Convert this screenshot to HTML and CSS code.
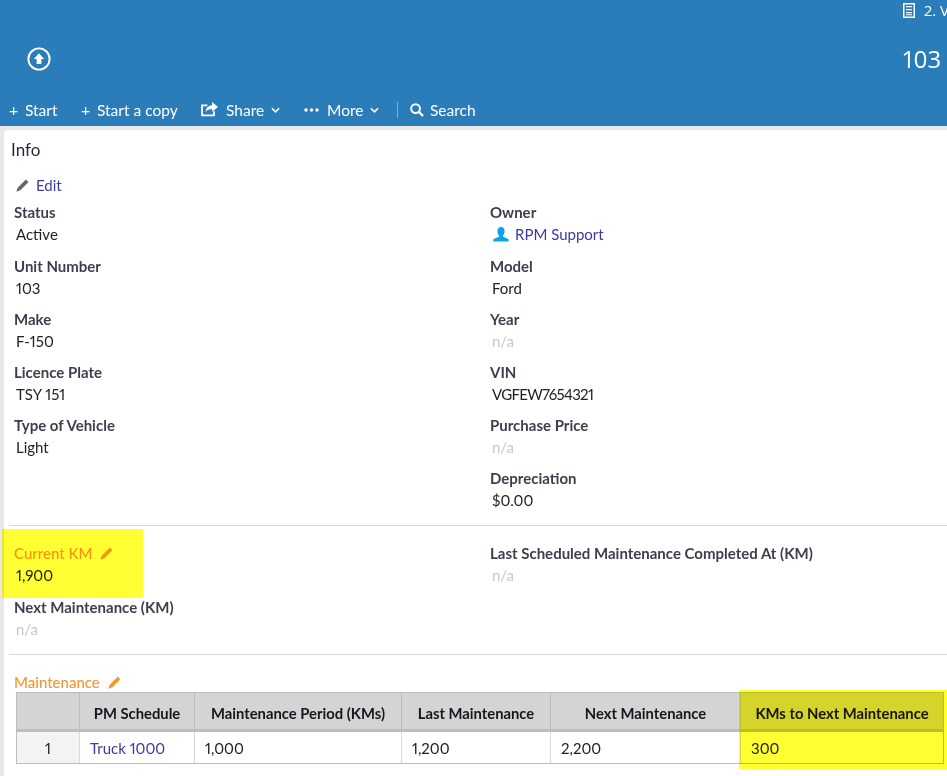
FILE: index.html
```html
<!DOCTYPE html>
<html lang="en">
<head>
<meta charset="utf-8">
<title>103</title>
<link rel="stylesheet" href="styles.css">
</head>
<body>
<header class="header">
  <div class="head-top">
    <svg class="up-icon" viewBox="0 0 24 24" width="24" height="24"><circle cx="12" cy="12" r="10.6" fill="none" stroke="#fff" stroke-width="1.9"/><path d="M12 6.2 17.2 12H14.4V17H9.6V12H6.8Z" fill="#fff"/></svg>
    <div class="head-right">
      <div class="crumb">
        <svg viewBox="0 0 12 15" width="12" height="15"><path fill="#fff" fill-rule="evenodd" d="M0 0H12V15H0ZM1.5 1.5V13.5H10.5V1.5ZM3 3H9V4.3H3ZM3 6H9V7.3H3ZM3 9H9V10.3H3ZM3 11.2H9V12.3H3Z"/></svg>
        <span>2. V</span>
      </div>
      <div class="head-title">103</div>
    </div>
  </div>
  <nav class="toolbar">
    <span class="tool tool-start"><span class="plus">+</span>Start</span>
    <span class="tool tool-copy"><span class="plus">+</span>Start a copy</span>
    <span class="tool tool-share">
      <svg viewBox="0 0 16 14" width="17" height="15"><path fill="none" stroke="#fff" stroke-width="1.7" d="M6 3.2H1V12.6H12.2V8.6"/><path fill="#fff" d="M10.4 0 16 4.6 10.4 9.2V6.5C7.8 6.5 6 7.2 4.3 9.4 4.6 5.9 6.8 3.3 10.4 3Z"/></svg>
      Share
      <svg class="chev" viewBox="0 0 10 6" width="9" height="6"><path d="M1 1 5 5 9 1" fill="none" stroke="#fff" stroke-width="1.8"/></svg>
    </span>
    <span class="tool tool-more">
      <svg viewBox="0 0 15 4" width="15" height="4"><circle cx="2" cy="2" r="1.7" fill="#fff"/><circle cx="7.5" cy="2" r="1.7" fill="#fff"/><circle cx="13" cy="2" r="1.7" fill="#fff"/></svg>
      More
      <svg class="chev" viewBox="0 0 10 6" width="9" height="6"><path d="M1 1 5 5 9 1" fill="none" stroke="#fff" stroke-width="1.8"/></svg>
    </span>
    <span class="tool-sep"></span>
    <span class="tool tool-search">
      <svg viewBox="0 0 14 14" width="14" height="14"><circle cx="5.6" cy="5.6" r="4.4" fill="none" stroke="#fff" stroke-width="1.9"/><path d="M9 9 13 13" stroke="#fff" stroke-width="2.4"/></svg>
      Search
    </span>
  </nav>
</header>
<main class="panel">
  <h1 class="panel-title">Info</h1>
  <div class="edit-row">
    <svg viewBox="0 0 14 14" width="13" height="13"><path fill="#666" d="M10.6.6 13.4 3.4 4.6 12.2.4 13.6 1.8 9.4Z"/></svg>
    <a class="link">Edit</a>
  </div>
  <section class="fields">
    <div class="field field-first"><div class="label">Status</div><div class="value">Active</div></div>
    <div class="field field-first"><div class="label">Owner</div><div class="value"><svg class="user" viewBox="0 0 16 15" width="16" height="15"><path fill="#0ca4e8" d="M8 0C10.4 0 11.6 1.8 11.6 4 11.6 6 10.8 7.6 9.9 8.4V9.6L15.6 12.2V14.6H.4V12.2L6.1 9.6V8.4C5.2 7.6 4.4 6 4.4 4 4.4 1.8 5.6 0 8 0Z"/></svg><a class="link">RPM Support</a></div></div>
    <div class="field"><div class="label">Unit Number</div><div class="value">103</div></div>
    <div class="field"><div class="label">Model</div><div class="value">Ford</div></div>
    <div class="field"><div class="label">Make</div><div class="value">F-150</div></div>
    <div class="field"><div class="label">Year</div><div class="value na">n/a</div></div>
    <div class="field"><div class="label">Licence Plate</div><div class="value">TSY 151</div></div>
    <div class="field"><div class="label">VIN</div><div class="value value-code">VGFEW7654321</div></div>
    <div class="field"><div class="label">Type of Vehicle</div><div class="value">Light</div></div>
    <div class="field"><div class="label">Purchase Price</div><div class="value na">n/a</div></div>
    <div class="field"></div>
    <div class="field"><div class="label">Depreciation</div><div class="value">$0.00</div></div>
  </section>
  <hr class="divider">
  <section class="fields fields-km">
    <div class="field"><div class="label label-orange">Current KM<svg class="pencil" viewBox="0 0 14 14" width="13" height="13"><path fill="#f7952f" d="M10.6.6 13.4 3.4 4.6 12.2.4 13.6 1.8 9.4Z"/></svg></div><div class="value">1,900</div></div>
    <div class="field"><div class="label">Last Scheduled Maintenance Completed At (KM)</div><div class="value na">n/a</div></div>
    <div class="field"><div class="label">Next Maintenance (KM)</div><div class="value na">n/a</div></div>
  </section>
  <hr class="divider divider-2">
  <div class="label label-orange label-section">Maintenance<svg class="pencil" viewBox="0 0 14 14" width="13" height="13"><path fill="#f7952f" d="M10.6.6 13.4 3.4 4.6 12.2.4 13.6 1.8 9.4Z"/></svg></div>
  <table class="grid">
    <colgroup><col class="c1"><col class="c2"><col class="c3"><col class="c4"><col class="c5"><col class="c6"></colgroup>
    <thead>
      <tr><th></th><th>PM Schedule</th><th>Maintenance Period (KMs)</th><th>Last Maintenance</th><th>Next Maintenance</th><th>KMs to Next Maintenance</th></tr>
    </thead>
    <tbody>
      <tr><td class="num">1</td><td><a class="link">Truck 1000</a></td><td>1,000</td><td>1,200</td><td>2,200</td><td>300</td></tr>
    </tbody>
  </table>
</main>
<div class="hl hl-km"></div>
<div class="hl hl-table"></div>
</body>
</html>
```
FILE: styles.css
```css
* { box-sizing: border-box; }
html, body { margin: 0; height: 776px; overflow: hidden; }
body {
  position: relative;
  width: 947px;
  background: #e8e8e8;
  font-family: "Lato", "Liberation Sans", sans-serif;
  font-size: 15px;
  font-variant-numeric: proportional-nums;
  color: #222;
}
.header { height: 126px; background: #2a7db8; color: #fff; }
.head-top { height: 93px; display: flex; }
.up-icon { flex: none; margin: 47px 0 0 27px; }
.head-right { flex: none; margin-left: 852px; white-space: nowrap; font-family: "Open Sans", sans-serif; }
.crumb { display: flex; align-items: center; gap: 9px; height: 20px; font-size: 15px; }
.head-title { font-size: 24px; line-height: 32px; margin-top: 23px; }
.toolbar { display: flex; align-items: center; height: 33px; padding-left: 9px; font-size: 15.5px; }
.tool { display: inline-flex; align-items: center; gap: 8px; white-space: nowrap; }
.plus { font-size: 16px; width: 10px; margin-right: -2px; }
.tool-start { width: 72px; }
.tool-copy { width: 120px; }
.tool-share { width: 103px; }
.tool-more { width: 93px; }
.tool-search { gap: 6px; margin-left: -1px; }
.chev { margin-left: -1px; }
.tool-sep { width: 1px; height: 16px; background: rgba(255,255,255,.4); margin-right: 13px; }
.panel {
  margin: 4px 0 0 4px;
  height: 660px;
  background: #fff;
  border-radius: 4px 0 0 0;
  padding: 8px 0 0 5px;
  overflow: hidden;
}
.panel-title { margin: 0 0 0 2px; font-size: 17px; font-weight: 400; line-height: 24px; color: #1e2a3c; }
.edit-row { display: flex; align-items: center; gap: 7px; height: 20px; margin: 13px 0 0 7px; }
.link { color: #3c3ba6; }
.fields { display: grid; grid-template-columns: 476px 1fr; padding-left: 5px; margin-top: 7px; }
.field { height: 53px; }
.field-first { height: 54px; }
.label { line-height: 20px; font-weight: 700; color: #3d3f4d; height: 20px; white-space: nowrap; font-size: 15px; display: flex; align-items: center; }
.value { line-height: 20px; margin-top: 2px; padding-left: 2px; color: #222; display: flex; align-items: center; }
.value-code { letter-spacing: -.7px; }
.na { color: #c8c8c8; }
.user { margin-right: 6px; margin-left: 1px; }
.divider { border: 0; border-top: 1px solid #d8d8d8; margin: 4px 0 0; }
.fields-km { margin-top: 17px; }
.fields-km .field { height: 54px; }
.divider-2 { margin-top: 3px; }
.label-orange { color: #f7952f; font-weight: 500; }
.pencil { margin-left: 8px; }
.label-section { margin: 17px 0 0 5px; height: 20px; }
.grid { border-collapse: collapse; table-layout: fixed; width: 927px; margin: 0 0 0 7px; }
.c1 { width: 63px; } .c2 { width: 115px; } .c3 { width: 207px; } .c4 { width: 149px; } .c5 { width: 190px; } .c6 { width: 203px; }
.grid th { height: 38px; background: #d4d4d4; border: 1px solid #bdbdbd; border-bottom-width: 3px; color: #16161e; font-weight: 700; text-align: center; font-size: 14.8px; padding: 4px 0 0; white-space: nowrap; }
.grid td { height: 33px; border: 1px solid #d8d8d8; border-bottom-color: #bdbdbd; padding: 1px 0 0 10px; color: #222; }
.grid td:first-child { border-left-color: #bdbdbd; }
.grid td:last-child { border-right-color: #bdbdbd; }
.grid .num { background: #f3f3f3; text-align: center; padding: 1px 0 0; }
.hl { position: absolute; background: #ffff33; mix-blend-mode: multiply; }
.hl-km { left: 2px; top: 529px; width: 141px; height: 69px; }
.hl-table { left: 739px; top: 690px; width: 208px; height: 79px; }
```
